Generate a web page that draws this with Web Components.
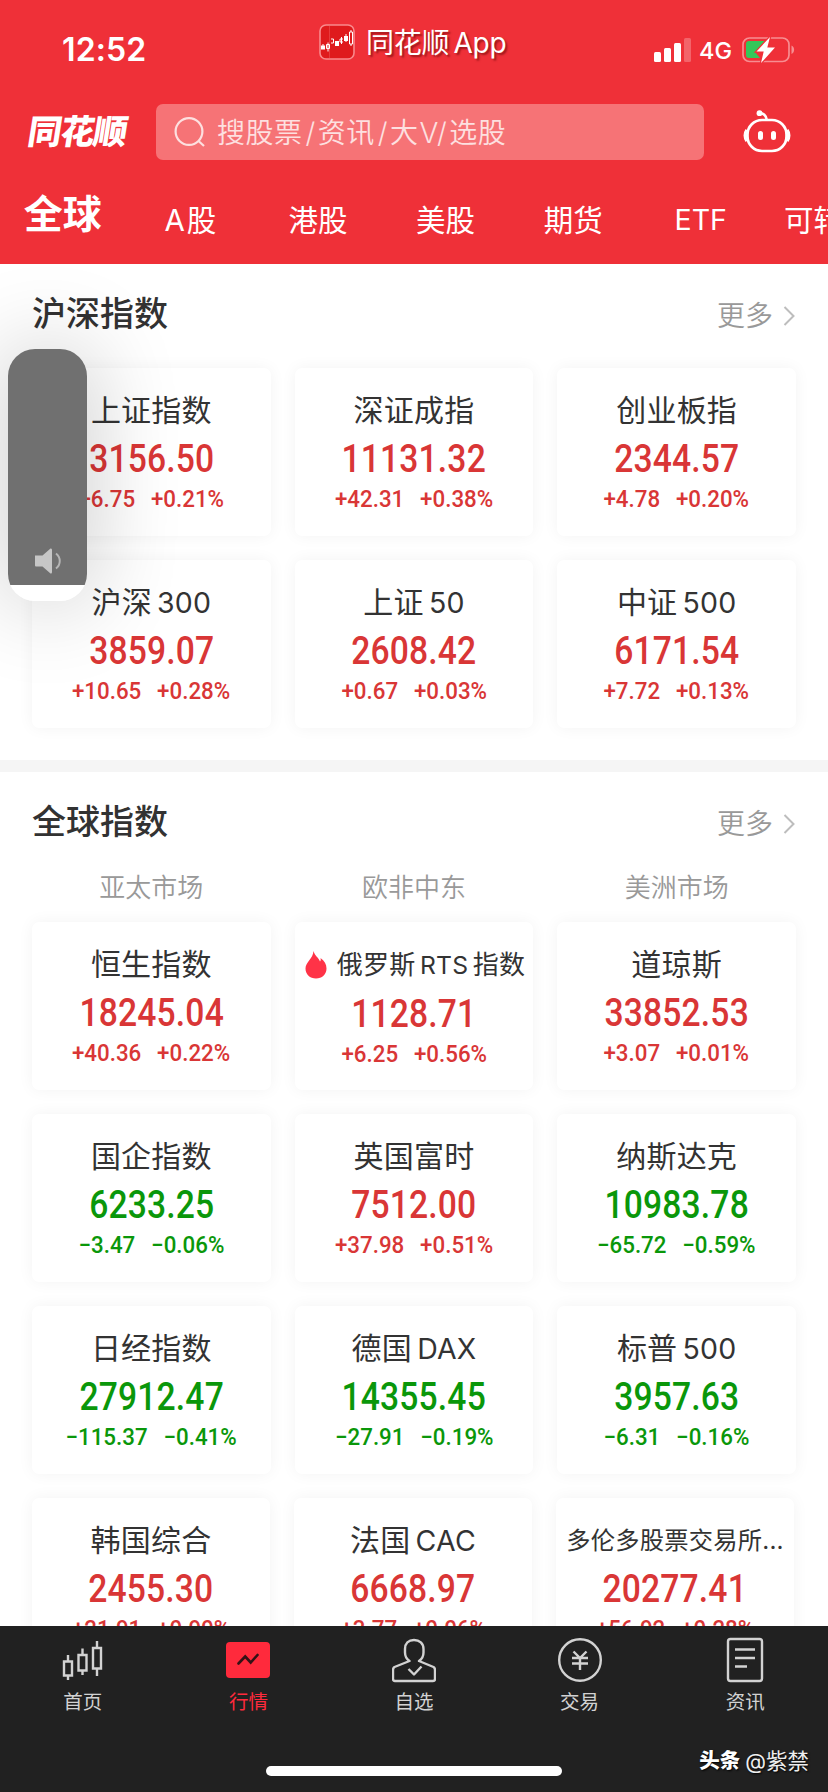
<!DOCTYPE html>
<html lang="zh-CN">
<head>
<meta charset="UTF-8">
<title>同花顺</title>
<style>
  html, body {
    margin: 0;
    height: 1792px;
    overflow: hidden;
    background: #fff;
  }

  body {
    font-family: Inter, "Noto Sans CJK SC", sans-serif;
    color: #323232;
  }
</style>
</head>
<body>
<market-app></market-app>

<script>
// Base class: attaches an open shadow root and fills it from render()
class BaseElement extends HTMLElement {
  constructor() {
    super();
    this.attachShadow({ mode: 'open' });
  }

  connectedCallback() {
    this.shadowRoot.innerHTML = this.render();
  }
}

class StatusBar extends BaseElement {
  render() {
    return `
      <style>
        :host {
          display: grid;
          grid-template-columns: 319px 1fr auto;
          height: 100px;
          color: #fff;
        }

        .time {
          padding: 30px 0 0 62px;
          font-size: 32px;
          line-height: 39px;
          font-weight: 600;
          letter-spacing: 0.1px;
        }

        .brand {
          display: flex;
          align-items: center;
          gap: 11px;
          height: 36px;
          margin-top: 24px;
          font-size: 28px;
          line-height: 36px;
          white-space: nowrap;
          text-shadow: 2px 2px 2px rgba(90, 0, 0, 0.55);
        }

        .brand span { letter-spacing: -0.2px; margin-top: 2px; }
        .brand b { font-weight: 400; margin-left: 4px; }

        .right {
          display: flex;
          align-items: center;
          height: 26px;
          margin-top: 37px;
          padding-right: 33px;
        }

        .net {
          margin: 1px 10px 0 8px;
          font-size: 23.5px;
          line-height: 26px;
          font-weight: 500;
        }

        svg { display: block; flex: none; }
      </style>
      <div class="time">12:52</div>
      <div class="brand">
        <svg width="36" height="36" viewBox="0 0 36 36">
          <rect x="1" y="1" width="34" height="34" rx="6" fill="#df1a1d" stroke="#f9898c" stroke-width="1.6"/>
          <path d="M10.5 2v32" stroke="#ec5053" stroke-width=".6"/>
          <path d="M2 21.500h4v4H2zM16 17h4v5h-4zM25 12h4v5h-4z" fill="#fff"/>
          <path d="M4 20v5M9 18.500v9M7.500 20.500h3v4h-3zM12 15h2.500v4H12M22.500 13v7M24 15h-3v3h3M27 10v8M30.500 8h3v12h-3zM32 6v2M32 20v2" fill="none" stroke="#fff" stroke-width="1"/>
        </svg>
        <span>同花顺<b>App</b></span>
      </div>
      <div class="right">
        <svg width="37" height="24" viewBox="0 0 37 24" fill="#fff">
          <rect x="0" y="14" width="7" height="10" rx="1.500"/>
          <rect x="10" y="10" width="7" height="14" rx="1.500"/>
          <rect x="20" y="5" width="7" height="19" rx="1.500"/>
          <rect x="30" y="0" width="7" height="24" rx="1.500" opacity=".25"/>
        </svg>
        <span class="net">4G</span>
        <svg width="53" height="26" viewBox="0 0 53 26">
          <rect x="1" y="1" width="46" height="23.500" rx="6.500" fill="none" stroke="#f78d91" stroke-width="1.700"/>
          <path d="M49.500 8.500c3.500 1.500 3.500 7 0 8.500z" fill="#f78d91"/>
          <path d="M7 4h16L13 15l5 6H7a3 3 0 0 1-3-3V7a3 3 0 0 1 3-3z" fill="#34c759"/>
          <path d="M28 0 14.500 14.500h7.200L19 26l14-15.500h-7.700z" fill="#fff" stroke="#ef3038" stroke-width="2.400" paint-order="stroke"/>
        </svg>
      </div>
    `;
  }
}

class SearchHeader extends BaseElement {
  render() {
    return `
      <style>
        :host {
          display: grid;
          grid-template-columns: 133px 548px 1fr;
          height: 64px;
          padding-left: 23px;
          color: #fff;
        }

        .logo {
          margin-top: 12px;
          font-size: 34px;
          line-height: 40px;
          font-weight: 800;
          letter-spacing: -1.2px;
          transform: skewX(-9deg);
          transform-origin: 0 100%;
        }

        .box {
          display: flex;
          align-items: center;
          height: 56px;
          margin-top: 4px;
          border-radius: 7px;
          background: #f67376;
          box-sizing: border-box;
          padding-left: 18px;
          font-size: 28px;
          font-weight: 350;
          letter-spacing: 0.5px;
          color: #fde0e0;
        }

        .box svg { margin-right: 12px; }
        .box > span { margin-top: -2px; }
        .slash { margin: 0 2px 0 3px; }
        .tight { margin-left: -2px; }
        .v { margin-left: 1px; }
        .robot { margin: 9px 0 0 39px; }
      </style>
      <div class="logo">同花顺</div>
      <div class="box">
        <svg width="31" height="32" viewBox="0 0 31 32" fill="none" stroke="#fde0e0" stroke-width="2.200">
          <circle cx="15" cy="15.500" r="13.400"/>
          <path d="m24.500 25 5.500 5"/>
        </svg>
        <span>搜股票<span class="slash">/</span>资讯<span class="slash">/</span>大<span class="v">V</span><span class="slash tight">/</span>选股</span>
      </div>
      <svg class="robot" width="48" height="44" viewBox="0 0 48 44" fill="none" stroke="#fff" stroke-width="2.700">
        <rect x="4.500" y="11" width="39" height="31" rx="14.500"/>
        <path d="M4 21c-2.300 3-2.300 8 0 11M44 21c2.300 3 2.300 8 0 11" stroke-width="3.500"/>
        <path d="M16 4.200c4-.2 7.500 2 7.800 7"/>
        <circle cx="16.500" cy="4.200" r="2.900" fill="#fff" stroke="none"/>
        <path d="M17.500 24.500v4M30.500 24.500v4" stroke-width="5" stroke-linecap="round"/>
      </svg>
    `;
  }
}

class MarketTabs extends BaseElement {
  render() {
    const tabs = ['全球', 'A股', '港股', '美股', '期货', 'ETF', '可转债'];
    return `
      <style>
        :host {
          display: grid;
          grid-auto-flow: column;
          grid-auto-columns: 127.6px;
          justify-content: start;
          align-items: center;
          height: 100px;
          padding-top: 12px;
          margin-left: -1px;
          box-sizing: border-box;
          overflow: hidden;
          color: #fff;
          font-size: 29.5px;
          line-height: 40px;
          text-align: center;
          white-space: nowrap;
        }

        .active {
          font-size: 39px;
          font-weight: 600;
          margin-top: -12px;
        }

        b { font-weight: 400; margin-right: 2px; }
        .latin { font-size: 28.5px; }
      </style>
      ${tabs.map((tab, i) => {
        const cls = i === 0 ? 'active' : tab === 'ETF' ? 'latin' : '';
        return `<div class="${cls}">${tab.replace(/^A/, '<b>A</b>')}</div>`;
      }).join('')}
    `;
  }
}

class SectionHead extends BaseElement {
  render() {
    return `
      <style>
        :host {
          display: flex;
          justify-content: space-between;
          align-items: center;
          height: 50px;
          padding: 0 33px 0 32px;
        }

        h2 {
          margin: 2px 0 0;
          font-size: 34px;
          line-height: 50px;
          font-weight: 500;
        }

        .more {
          display: flex;
          align-items: center;
          padding-top: 6px;
          font-size: 28px;
          line-height: 40px;
          font-weight: 350;
          color: #999;
        }

        svg { margin-left: 10px; }
      </style>
      <h2><slot></slot></h2>
      <div class="more">更多
        <svg width="12" height="20" viewBox="0 0 12 20" fill="none" stroke="#bdbdbd" stroke-width="2">
          <path d="m1.500 1 9 9-9 9"/>
        </svg>
      </div>
    `;
  }
}

class IndexGrid extends BaseElement {
  render() {
    return `
      <style>
        :host {
          display: grid;
          grid-template-columns: repeat(3, minmax(0, 1fr));
          gap: 24px;
          padding: 0 32px;
        }
      </style>
      <slot></slot>
    `;
  }
}

class IndexCard extends BaseElement {
  render() {
    const get = name => this.getAttribute(name);
    const flame = `
      <svg width="22" height="28" viewBox="0 0 22 28">
        <path d="M8.500 0c1 4.500 5 6.500 6.500 10.500.9-1 .9-2 .5-3.500C19.500 10 21.500 13 21.500 17.500c0 6-4.500 10-10.500 10S.5 23.500.5 17.500C.5 11 8 8 8.500 0z" fill="#ff3347"/>
      </svg>`;
    return `
      <style>
        :host {
          display: flex;
          flex-direction: column;
          align-items: center;
          height: 168px;
          border-radius: 7px;
          background: #fff;
          box-shadow: 0 0 16px rgba(0, 0, 0, 0.05);
          color: ${get('change').startsWith('+') ? '#d93636' : '#0a970a'};
          white-space: nowrap;
        }

        .name {
          display: flex;
          align-items: center;
          height: 44px;
          margin-top: 20px;
          font-size: 30px;
          line-height: 44px;
          font-weight: 400;
          letter-spacing: 0.2px;
          color: #333;
        }

        :host([size="m"]) .name { font-size: 26px; padding-top: 1px; }
        :host([size="s"]) .name { font-size: 24.300px; letter-spacing: 0.2px; }
        .name svg { margin: 0 10px 0 2px; }
        .latin { font-size: 0.95em; }

        .price, .delta { font-family: Roboto, sans-serif; }

        .price {
          margin-top: 4px;
          font-size: 38px;
          line-height: 46px;
          font-weight: 550;
          letter-spacing: 0.2px;
          transform: scaleX(0.885);
        }

        .delta {
          display: flex;
          gap: 17px;
          margin-top: 2px;
          font-size: 24px;
          line-height: 30px;
          font-weight: 500;
          transform: scaleX(0.93);
        }
      </style>
      <div class="name">${this.hasAttribute('hot') ? flame : ''}<span>${get('name').replace(/[A-Z0-9]+/, '<span class="latin">$&</span>')}</span></div>
      <div class="price">${get('price')}</div>
      <div class="delta"><span>${get('change')}</span><span>${get('percent')}</span></div>
    `;
  }
}

class VolumeHud extends BaseElement {
  render() {
    return `
      <style>
        :host {
          display: flex;
          flex-direction: column;
          justify-content: flex-end;
          align-items: center;
          box-sizing: border-box;
          width: 79px;
          height: 252px;
          padding-bottom: 27px;
          border-radius: 27px;
          background: linear-gradient(#707070 236px, #fff 236px);
          box-shadow: 0 0 90px 4px rgba(0, 0, 0, 0.2);
        }
      </style>
      <svg width="28" height="26" viewBox="0 0 28 26">
        <path d="M1 7.500h7.500L16.500 0.500Q18 0 18 2v22q0 2-1.500 1.500L8.500 18.500H2q-1 0-1-1z" fill="#c6c6c6"/>
        <path d="M22 5.500c5 4 5 11 0 15" fill="none" stroke="#b5b5b5" stroke-width="2"/>
      </svg>
    `;
  }
}

class TabItem extends BaseElement {
  render() {
    return `
      <style>
        :host {
          display: flex;
          flex-direction: column;
          align-items: center;
          padding-top: 10px;
          font-size: 19.500px;
          line-height: 28px;
          color: #d2d2d2;
        }

        :host([active]) { color: #ff2a3c; }
        .icon { height: 48px; margin-bottom: 4px; }
      </style>
      <div class="icon"><slot name="icon"></slot></div>
      <span><slot></slot></span>
    `;
  }
}

class BottomBar extends BaseElement {
  render() {
    return `
      <style>
        :host {
          display: block;
          height: 166px;
          background: #212121;
        }

        nav {
          display: grid;
          grid-template-columns: repeat(5, 1fr);
          height: 114px;
        }

        svg {
          display: block;
          fill: none;
          stroke: #d2d2d2;
          stroke-width: 2.400;
        }

        .foot {
          display: grid;
          grid-template-columns: 266px 296px 1fr;
          height: 52px;
        }

        .home {
          grid-column: 2;
          height: 10px;
          margin-top: 26px;
          border-radius: 5px;
          background: #fff;
        }

        .mark {
          display: flex;
          justify-content: flex-end;
          gap: 5px;
          padding: 6px 19px 0 0;
          font-size: 21.500px;
          line-height: 30px;
          color: #eee;
          text-shadow: 1px 1px 2px #000;
        }

        .mark b { font-weight: 900; color: #fff; font-size: 20.500px; }
      </style>
      <nav>
        <tab-item>
          <svg slot="icon" width="44" height="48" viewBox="0 0 44 48">
            <path d="M3 25.500h8v14H3zM7 19v6.500M7 39.500V44M17.500 19h8v15.500h-8zM21.500 12.500V19M21.500 34.500V39M32 12h8v20.500h-8zM36 5v7M36 32.500V40"/>
          </svg>首页
        </tab-item>
        <tab-item active>
          <svg slot="icon" width="44" height="48" viewBox="0 0 44 48">
            <rect y="6" width="44" height="36" rx="4" fill="#ff2a3c" stroke="none"/>
            <path d="m12.500 27.500 6.700-7 5.500 6 6.800-7.500" stroke="#351216" stroke-width="2.600" stroke-linecap="round"/>
          </svg>行情
        </tab-item>
        <tab-item>
          <svg slot="icon" width="44" height="48" viewBox="0 0 44 48" stroke-linejoin="round">
            <path d="M17.500 25c-3-2-4.500-5-4.500-8.500V13C13 7.500 16.500 4 22 4s9.500 3.500 9.500 9v3.500c0 3.500-1.500 6.500-4.500 8.500l14.500 6q1.500 1 1.500 3v9q0 2-2 2H3q-2 0-2-2v-9q0-2 1.500-3z"/>
            <path d="m16.500 33 5.500 5.500 7.500-8"/>
          </svg>自选
        </tab-item>
        <tab-item>
          <svg slot="icon" width="44" height="48" viewBox="0 0 44 48">
            <circle cx="22" cy="24" r="20.800"/>
            <path d="m15.500 15.500 6.500 6.500 6.500-6.500M14 22h16M14 27.500h16M22 22v12"/>
          </svg>交易
        </tab-item>
        <tab-item>
          <svg slot="icon" width="44" height="48" viewBox="0 0 44 48">
            <rect x="5" y="3" width="34" height="42" rx="2.500"/>
            <path d="M12 13.500h20M12 22h20M12 30.500h12"/>
          </svg>资讯
        </tab-item>
      </nav>
      <div class="foot">
        <div class="home"></div>
        <div class="mark"><b>头条</b><span>@紫禁</span></div>
      </div>
    `;
  }
}

const CHINA = [
  ['上证指数', '3156.50', '+6.75', '+0.21%'],
  ['深证成指', '11131.32', '+42.31', '+0.38%'],
  ['创业板指', '2344.57', '+4.78', '+0.20%'],
  ['沪深 300', '3859.07', '+10.65', '+0.28%'],
  ['上证 50', '2608.42', '+0.67', '+0.03%'],
  ['中证 500', '6171.54', '+7.72', '+0.13%'],
];

const WORLD = [
  ['恒生指数', '18245.04', '+40.36', '+0.22%'],
  ['俄罗斯 RTS 指数', '1128.71', '+6.25', '+0.56%', 'size="m" hot'],
  ['道琼斯', '33852.53', '+3.07', '+0.01%'],
  ['国企指数', '6233.25', '−3.47', '−0.06%'],
  ['英国富时', '7512.00', '+37.98', '+0.51%'],
  ['纳斯达克', '10983.78', '−65.72', '−0.59%'],
  ['日经指数', '27912.47', '−115.37', '−0.41%'],
  ['德国 DAX', '14355.45', '−27.91', '−0.19%'],
  ['标普 500', '3957.63', '−6.31', '−0.16%'],
];

const WORLD_LAST = [
  ['韩国综合', '2455.30', '+21.91', '+0.90%'],
  ['法国 CAC', '6668.97', '+3.77', '+0.06%'],
  ['多伦多股票交易所...', '20277.41', '+56.92', '+0.28%', 'size="s"'],
];

class MarketApp extends BaseElement {
  cards(list) {
    return list.map(([name, price, change, percent, extra = '']) => {
      // thin gap between Chinese and Latin parts of a name
      const label = name.replace(/ /g, '\u2006');
      return `<index-card name="${label}" price="${price}" change="${change}" percent="${percent}" ${extra}></index-card>`;
    }).join('');
  }

  render() {
    return `
      <style>
        :host {
          display: grid;
          grid-template-rows: 264px 1362px 166px;
          position: relative;
          width: 828px;
          height: 1792px;
          overflow: hidden;
        }

        header { background: #ef3038; overflow: hidden; }
        main { overflow: hidden; background: #fff; }

        .china { height: 496px; padding-top: 24px; box-sizing: border-box; }
        .china index-grid { margin-top: 30px; }
        .world { border-top: 12px solid #f5f5f5; padding-top: 24px; }

        .regions {
          display: grid;
          grid-template-columns: repeat(3, minmax(0, 1fr));
          gap: 24px;
          padding: 0 32px;
          margin: 24px 0 16px;
          font-size: 26px;
          line-height: 36px;
          font-weight: 350;
          text-align: center;
          color: #999;
        }

        .last { margin-top: 24px; margin-right: 2px; }

        /* floats over the page while the volume changes */
        volume-hud { position: absolute; left: 8px; top: 349px; }
      </style>
      <header>
        <status-bar></status-bar>
        <search-header></search-header>
        <market-tabs></market-tabs>
      </header>
      <main>
        <section class="china">
          <section-head>沪深指数</section-head>
          <index-grid>${this.cards(CHINA)}</index-grid>
        </section>
        <section class="world">
          <section-head>全球指数</section-head>
          <div class="regions"><span>亚太市场</span><span>欧非中东</span><span>美洲市场</span></div>
          <index-grid>${this.cards(WORLD)}</index-grid>
          <index-grid class="last">${this.cards(WORLD_LAST)}</index-grid>
        </section>
      </main>
      <bottom-bar></bottom-bar>
      <volume-hud></volume-hud>
    `;
  }
}

customElements.define('status-bar', StatusBar);
customElements.define('search-header', SearchHeader);
customElements.define('market-tabs', MarketTabs);
customElements.define('section-head', SectionHead);
customElements.define('index-grid', IndexGrid);
customElements.define('index-card', IndexCard);
customElements.define('volume-hud', VolumeHud);
customElements.define('tab-item', TabItem);
customElements.define('bottom-bar', BottomBar);
customElements.define('market-app', MarketApp);
</script>
</body>
</html>
